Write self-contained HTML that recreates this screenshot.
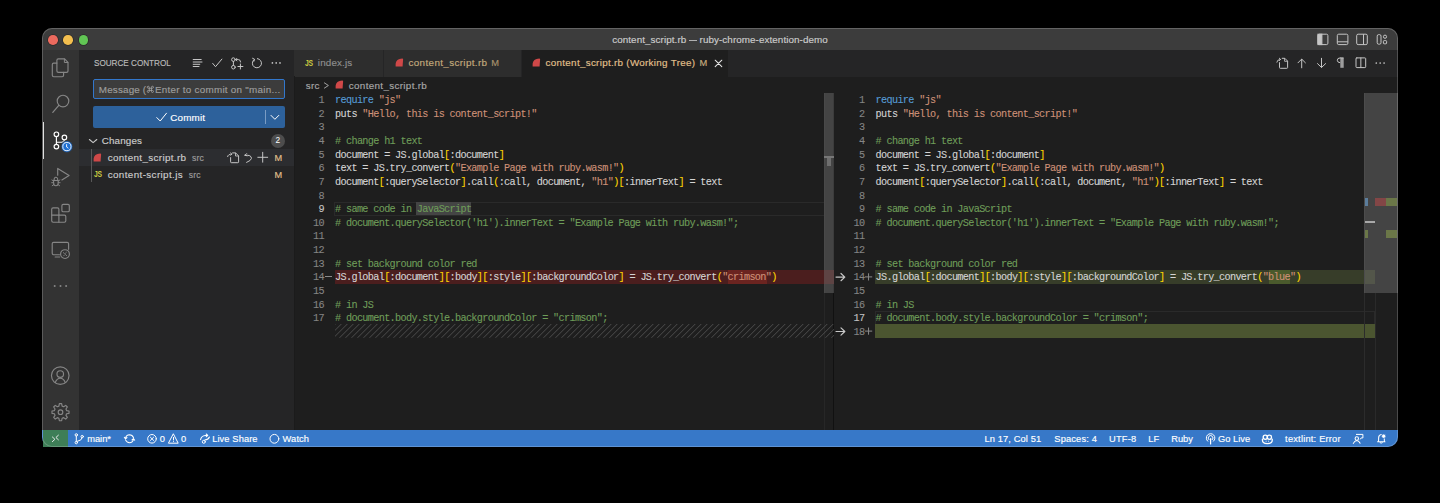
<!DOCTYPE html>
<html><head><meta charset="utf-8"><title>VS Code</title>
<style>
html,body{margin:0;padding:0;background:#000;width:1440px;height:503px;overflow:hidden;}
*{box-sizing:border-box;}
.a{position:absolute;}
.ui{font-family:"Liberation Sans",sans-serif;}
.mono{font-family:"Liberation Mono",monospace;}
#win{position:absolute;left:42px;top:28px;width:1355.5px;height:419px;border-radius:10px;overflow:hidden;background:#1e1e1e;}
#title{position:absolute;left:0;top:0;width:1355.5px;height:21.7px;background:#3c3c3c;}
#act{position:absolute;left:0;top:21.7px;width:37px;height:380.3px;background:#333333;}
#side{position:absolute;left:37px;top:21.7px;width:215px;height:380.3px;background:#252526;}
#tabs{position:absolute;left:252px;top:21.7px;width:1103.5px;height:27px;background:#252526;}
#status{position:absolute;left:0;top:402px;width:1355.5px;height:17px;background:#3778c8;}
.ln{position:absolute;left:0;height:13.625px;line-height:13.625px;font-family:"Liberation Mono",monospace;font-size:10.2px;letter-spacing:-0.663px;transform:translateY(1.1px);-webkit-text-stroke:0.1px currentColor;color:#d4d4d4;white-space:pre;}
.num{position:absolute;height:13.625px;line-height:13.625px;font-family:"Liberation Mono",monospace;font-size:10.2px;letter-spacing:-0.663px;transform:translateY(1.1px);-webkit-text-stroke:0.1px currentColor;color:#858585;text-align:right;white-space:pre;}
.num.act{color:#c6c6c6;}
.k{color:#569cd6}.s{color:#ce9178}.c{color:#6e9d59}.b{color:#ffd700}
.wh{}
.rt{}
.it{}
.tl{width:9.6px;height:9.6px;border-radius:50%;box-shadow:0 0 0 0.7px rgba(20,20,20,0.45);}
.stx{top:430px;height:17px;line-height:17px;font-size:9.3px;color:#ffffff;white-space:nowrap;z-index:10;}
.ui{transform:translateY(0.9px);-webkit-text-stroke:0.15px currentColor;}

</style></head>
<body>
<div id="win">
  <div id="title"></div>
  <div id="act"></div>
  <div id="side"></div>
  <div id="tabs"></div>
  <div id="status"></div>
</div>
<div class="a" style="left:42px;top:28px;width:1355.5px;height:419px;border-radius:10px;box-shadow:inset 0 0 0 1px rgba(255,255,255,0.2);pointer-events:none;z-index:50"></div>
<!-- traffic lights -->
<div class="a tl" style="left:48.2px;top:35.1px;background:#ec6a5e"></div>
<div class="a tl" style="left:63.4px;top:35.1px;background:#f4bf4f"></div>
<div class="a tl" style="left:78.5px;top:35.1px;background:#61c554"></div>
<div class="a ui" style="left:612.2px;top:28px;height:21.7px;line-height:21.7px;font-size:9.85px;color:#cccccc;letter-spacing:0.08px;white-space:nowrap">content_script.rb</div>
<div class="a" style="left:689.1px;top:39.8px;width:7.7px;height:1px;background:#b0b0b0"></div>
<div class="a ui" style="left:699.6px;top:28px;height:21.7px;line-height:21.7px;font-size:9.85px;color:#cccccc;letter-spacing:0.07px;white-space:nowrap">ruby-chrome-extention-demo</div>
<!-- layout icons -->
<svg class="a" style="left:1316px;top:33px" width="14" height="13" viewBox="0 0 14 13" fill="none" stroke="#c5c5c5" stroke-width="1">
  <rect x="1.9" y="1.2" width="10" height="10.4" rx="1.4"/><rect x="1.9" y="1.2" width="4" height="10.4" fill="#c5c5c5"/>
</svg>
<svg class="a" style="left:1336px;top:33px" width="14" height="13" viewBox="0 0 14 13" fill="none" stroke="#c5c5c5" stroke-width="1">
  <rect x="1.3" y="1.2" width="10.6" height="10.4" rx="1.4"/><line x1="1.3" y1="8.8" x2="11.9" y2="8.8"/>
</svg>
<svg class="a" style="left:1355px;top:33px" width="14" height="13" viewBox="0 0 14 13" fill="none" stroke="#c5c5c5" stroke-width="1">
  <rect x="1.7" y="1.2" width="10.6" height="10.4" rx="1.4"/><line x1="8.5" y1="1.2" x2="8.5" y2="11.6"/>
</svg>
<svg class="a" style="left:1375px;top:33px" width="14" height="13" viewBox="0 0 14 13" fill="none" stroke="#c5c5c5" stroke-width="1">
  <rect x="2.2" y="1.6" width="3.8" height="9.6" rx="1.5"/><circle cx="10" cy="3.7" r="1.6"/><rect x="8.4" y="7.6" width="3.2" height="3.2" rx="0.8"/>
</svg>
<svg class="a" style="left:0;top:0;z-index:20" width="100" height="503" viewBox="0 0 100 503">
<g fill="none" stroke="#868686" stroke-width="1.15" stroke-linejoin="round" stroke-linecap="round">
  <!-- files -->
  <path d="M56.9 63.1 H53.7 Q52.3 63.1 52.3 64.5 V75.3 Q52.3 76.7 53.7 76.7 H62.2 Q63.6 76.7 63.6 75.3 V72.3"/>
  <path d="M58.3 58.9 H64.6 L68 62.3 V70.9 Q68 72.3 66.6 72.3 H58.3 Q56.9 72.3 56.9 70.9 V60.3 Q56.9 58.9 58.3 58.9 Z"/>
  <path d="M64.4 59.1 V62.5 H67.8" stroke-width="1"/>
  <!-- search -->
  <circle cx="63" cy="101.1" r="5.8"/>
  <path d="M58.8 105.4 L52.8 112.3" stroke-width="1.25"/>
  <!-- debug -->
  <path d="M57.7 175.2 V168.4 L69.1 175.5 L61.9 180"/>
  <path d="M54 180.3 Q54.1 177.3 55.9 177.3 Q57.7 177.3 57.8 180.3" stroke-width="1.05"/>
  <path d="M53.6 180.4 H58.2 V183.1 Q58.2 185.8 55.9 185.8 Q53.6 185.8 53.6 183.1 Z" stroke-width="1.05"/>
  <path d="M53.6 181 L51.9 180 M58.2 181 L59.9 180 M53.6 182.7 H51.7 M58.2 182.7 H60.1 M53.9 184.5 L52.2 185.7 M57.9 184.5 L59.6 185.7" stroke-width="0.95"/>
  <!-- extensions -->
  <path d="M53.1 207.9 H57.5 Q58.9 207.9 58.9 209.3 V215.1 H64.4 Q65.8 215.1 65.8 216.5 V220.8 Q65.8 222.2 64.4 222.2 H53.1 Q51.7 222.2 51.7 220.8 V209.3 Q51.7 207.9 53.1 207.9 Z"/>
  <path d="M51.7 215.1 H58.9 V222.2"/>
  <rect x="61.9" y="204.4" width="7.4" height="7.4" rx="1.3"/>
  <!-- remote explorer -->
  <path d="M59.5 254.7 H53.6 Q52.2 254.7 52.2 253.3 V243.8 Q52.2 242.4 53.6 242.4 H67.2 Q68.6 242.4 68.6 243.8 V249.3"/>
  <path d="M55.2 257 H59.6" stroke-width="1.2"/>
  <circle cx="65" cy="254.1" r="4.4"/>
  <path d="M63.3 252.6 L64.5 253.6 M66.7 255.6 L65.5 254.6 M63.6 255.9 L64.6 254.9 M66.4 252.3 L65.4 253.3" stroke-width="0.9"/>
  <!-- account -->
  <circle cx="60.25" cy="375.6" r="8.8"/>
  <circle cx="60.25" cy="374" r="3.3"/>
  <path d="M55.3 382.4 Q56.8 378.2 60.25 378.2 Q63.7 378.2 65.2 382.4"/>
  <!-- gear -->
  <circle cx="60.5" cy="412.2" r="2.3"/>
</g>
<g fill="#868686">
  <circle cx="54.7" cy="285.9" r="1"/><circle cx="60.5" cy="285.9" r="1"/><circle cx="66.1" cy="285.9" r="1"/>
</g>
<path id="gear" fill="none" stroke="#868686" stroke-width="1.15" stroke-linejoin="round" d="M59.36 403.68 L61.64 403.68 L62.11 406.11 L63.66 406.75 L65.72 405.36 L67.34 406.98 L65.95 409.04 L66.59 410.59 L69.02 411.06 L69.02 413.34 L66.59 413.81 L65.95 415.36 L67.34 417.42 L65.72 419.04 L63.66 417.65 L62.11 418.29 L61.64 420.72 L59.36 420.72 L58.89 418.29 L57.34 417.65 L55.28 419.04 L53.66 417.42 L55.05 415.36 L54.41 413.81 L51.98 413.34 L51.98 411.06 L54.41 410.59 L55.05 409.04 L53.66 406.98 L55.28 405.36 L57.34 406.75 L58.89 406.11 Z"/>
<!-- source control (active) -->
<g fill="none" stroke="#ffffff" stroke-width="1.15">
  <circle cx="56.4" cy="134.3" r="2.3"/>
  <circle cx="64.4" cy="137.4" r="2.3"/>
  <circle cx="56.4" cy="146.6" r="2.3"/>
  <path d="M56.4 136.6 V144.3"/>
  <path d="M64.4 139.7 Q64.4 142.2 61.5 142.2 H56.4"/>
</g>
<circle cx="66.9" cy="146.6" r="5.8" fill="#1f6fd1" stroke="#333" stroke-width="0.8"/>
<circle cx="66.9" cy="146.6" r="4.1" fill="none" stroke="#fff" stroke-width="0.9"/>
<path d="M66.6 144.2 V147 L68.4 148.3" fill="none" stroke="#fff" stroke-width="0.9"/>
</svg>
<div class="a" style="left:42.5px;top:122px;width:1.6px;height:36.5px;background:#e0e0e0"></div>

<div class="a" style="font-family:&quot;Liberation Sans&quot;,sans-serif;left:94px;top:56.6px;font-size:8.9px;line-height:12px;color:#bbbbbb;white-space:nowrap;transform:scaleX(0.916);transform-origin:0 0;-webkit-text-stroke:0.15px currentColor">SOURCE CONTROL</div>
<svg class="a" style="left:180px;top:50px;z-index:20" width="114" height="26" viewBox="180 50 114 26">
<g fill="none" stroke="#c5c5c5" stroke-width="1" stroke-linecap="round" stroke-linejoin="round">
  <path d="M193.2 59.5 H201.2 M193.2 62 H202 M193.2 64.3 H199.8 M193.2 66.5 H199"/>
  <path d="M212.7 63.4 L215.5 66.7 L221.9 59.1"/>
  <circle cx="233.4" cy="59.6" r="1.8"/><circle cx="233.4" cy="67.2" r="1.8"/>
  <path d="M233.4 61.4 V65.4"/>
  <path d="M235.6 59.6 H238.4 Q240.6 59.6 240.6 62"/>
  <path d="M236.9 58.3 L235.6 59.6 L236.9 60.9" stroke-width="0.9"/>
  <path d="M240.4 64 V69 M237.9 66.5 H242.9"/>
  <path d="M254 59.6 A4.6 4.6 0 1 0 257.4 58.6"/>
  <path d="M252.6 58.3 L254.6 59.3 L253.9 61.3" stroke-width="1"/>
</g>
<g fill="#c5c5c5"><circle cx="272.4" cy="62.9" r="0.85"/><circle cx="276.2" cy="62.9" r="0.85"/><circle cx="280" cy="62.9" r="0.85"/></g>
</svg>
<!-- input -->
<div class="a" style="left:93.2px;top:79.2px;width:191.6px;height:19.7px;background:#3c3c3c;border:1.2px solid #3277cc;border-radius:2px"></div>
<div class="a ui" style="left:98.8px;top:79.4px;height:19.6px;line-height:19.6px;font-size:9.85px;color:#9e9e9e;letter-spacing:0.17px;white-space:nowrap">Message (</div>
<svg class="a" style="left:144px;top:83px;z-index:20" width="14" height="14" viewBox="144 83 14 14"><path d="M149.25 87.25 V91.45 A1 1 0 1 1 148.25 90.45 H152.45 A1 1 0 1 1 151.45 91.45 V87.25 A1 1 0 1 1 152.45 88.25 H148.25 A1 1 0 1 1 149.25 87.25 Z" fill="none" stroke="#a0a0a0" stroke-width="0.85"/></svg>
<div class="a ui" style="left:155px;top:79.4px;height:19.6px;line-height:19.6px;font-size:9.85px;color:#9e9e9e;letter-spacing:0.26px;white-space:nowrap">Enter to commit on "main...</div>
<!-- commit -->
<div class="a" style="left:93.2px;top:106.2px;width:191.4px;height:21.5px;background:#2d619b;border-radius:2px"></div>
<div class="a" style="left:265px;top:109.8px;width:0.9px;height:14.6px;background:#7a9cc4"></div>
<svg class="a" style="left:150px;top:104px;z-index:20" width="140" height="26" viewBox="150 104 140 26">
<g fill="none" stroke="#ffffff" stroke-width="1" stroke-linecap="round" stroke-linejoin="round">
<path d="M156.8 117.6 L160.2 121 L166.5 113.2"/>
<path d="M271 115.4 L274.9 119.3 L278.8 115.4"/>
</g></svg>
<div class="a ui" style="left:170.2px;top:106.6px;height:20.8px;line-height:20.8px;font-size:9.85px;color:#ffffff;letter-spacing:0.2px;white-space:nowrap">Commit</div>
<!-- changes header -->
<svg class="a" style="left:80px;top:130px;z-index:20" width="30" height="20" viewBox="80 130 30 20">
<path d="M89.4 139.5 L93.1 142.6 L96.8 139.5" fill="none" stroke="#c5c5c5" stroke-width="1.15" stroke-linecap="round" stroke-linejoin="round"/>
</svg>
<div class="a ui" style="left:101.7px;top:132.2px;height:16.7px;line-height:16.7px;font-size:9.85px;color:#cccccc;letter-spacing:0.15px;white-space:nowrap">Changes</div>
<div class="a" style="font-family:&quot;Liberation Sans&quot;,sans-serif;left:270.9px;top:134px;width:14px;height:13.6px;border-radius:7px;background:#4d4d4d;color:#ffffff;font-size:8.3px;line-height:13.6px;text-align:center">2</div>
<!-- row1 -->
<div class="a" style="left:79px;top:148.9px;width:215px;height:16.7px;background:#2c2d30"></div>
<div class="a" style="left:91px;top:148.9px;width:0.8px;height:33.4px;background:#585858"></div>
<svg class="a" style="left:93.4px;top:152.6px;z-index:20" width="10" height="10" viewBox="0 0 10 10"><path d="M0.6 8.4 V6 Q0.9 0.8 7.3 0.4 Q8.1 0.4 8.1 1.2 L7.6 8.4 Z" fill="#cf4848"/></svg>
<div class="a ui" style="left:107.7px;top:148.9px;height:16.7px;line-height:16.7px;font-size:9.85px;color:#cccccc;letter-spacing:0.35px;white-space:nowrap">content_script.rb <span style="font-size:8.6px;color:#9d9d9d;letter-spacing:0.15px">&nbsp;src</span></div>
<svg class="a" style="left:225px;top:150px;z-index:20" width="50" height="15" viewBox="225 150 50 15">
<g fill="none" stroke="#c5c5c5" stroke-width="1" stroke-linejoin="round" stroke-linecap="round">
 <path d="M232.6 152.9 H235.6 L238.6 155.9 V161.9 Q238.6 162.7 237.8 162.7 H231.4 Q230.6 162.7 230.6 161.9 V157.6"/>
 <path d="M235.5 153.1 V156 H238.4" stroke-width="0.85"/>
 <path d="M227.6 156.6 Q227.8 154.2 231.8 154.1 M230.6 153 L231.9 154.1 L230.7 155.3" stroke-width="0.95"/>
 <path d="M245.2 155.3 Q251.6 154.6 251.4 158.5 Q251.1 160.6 246.6 162.4" stroke-width="1"/>
 <path d="M245 155.2 L246.6 153.6 M245 155.2 L247.1 155.8" stroke-width="1"/>
 <path d="M262.7 152.3 V162.2 M257.8 157.3 H267.7"/>
</g></svg>
<div class="a ui" style="left:274.5px;top:148.9px;height:16.7px;line-height:16.7px;font-size:9.2px;color:#e2c08d;white-space:nowrap">M</div>
<!-- row2 -->
<div class="a" style="font-family:&quot;Liberation Sans&quot;,sans-serif;left:94px;top:165.6px;height:16.7px;line-height:16.7px;font-size:8.5px;font-weight:bold;color:#cbcb41;white-space:nowrap;letter-spacing:-0.5px;transform:scaleX(0.8) translateY(0.4px);transform-origin:0 0">JS</div>
<div class="a ui" style="left:107.7px;top:165.6px;height:16.7px;line-height:16.7px;font-size:9.85px;color:#cccccc;letter-spacing:0.38px;white-space:nowrap">content-script.js <span style="font-size:8.6px;color:#9d9d9d;letter-spacing:0.15px">&nbsp;src</span></div>
<div class="a ui" style="left:274.5px;top:165.6px;height:16.7px;line-height:16.7px;font-size:9.2px;color:#e2c08d;white-space:nowrap">M</div>

<!-- tabs -->
<div class="a" style="left:294px;top:49.7px;width:89.4px;height:27px;background:#2d2d2d"></div>
<div class="a" style="left:384.2px;top:49.7px;width:137.3px;height:27px;background:#2d2d2d"></div>
<div class="a" style="left:521.7px;top:49.7px;width:206.8px;height:27px;background:#1e1e1e"></div>
<div class="a" style="font-family:&quot;Liberation Sans&quot;,sans-serif;left:304.6px;top:49.7px;height:26.6px;line-height:26.6px;font-size:8.5px;font-weight:bold;color:#cbcb41;white-space:nowrap;letter-spacing:-0.5px;transform:scaleX(0.8) translateY(0.2px);transform-origin:0 0">JS</div>
<div class="a ui" style="left:317.8px;top:52.3px;height:20px;line-height:20px;font-size:9.85px;color:#8f8f8f;letter-spacing:0.15px;white-space:nowrap">index.js</div>
<svg class="a" style="left:395.1px;top:58.4px" width="10" height="10" viewBox="0 0 10 10"><path d="M0.6 8.4 V6 Q0.9 0.8 7.3 0.4 Q8.1 0.4 8.1 1.2 L7.6 8.4 Z" fill="#cf4848"/></svg>
<div class="a ui" style="left:408.5px;top:52.3px;height:20px;line-height:20px;font-size:9.85px;color:#c4ab7d;letter-spacing:0.36px;white-space:nowrap">content_script.rb</div>
<div class="a ui" style="left:491.3px;top:52.3px;height:20px;line-height:20px;font-size:9.3px;color:#a8926c;white-space:nowrap">M</div>
<svg class="a" style="left:532.2px;top:58.4px" width="10" height="10" viewBox="0 0 10 10"><path d="M0.6 8.4 V6 Q0.9 0.8 7.3 0.4 Q8.1 0.4 8.1 1.2 L7.6 8.4 Z" fill="#cf4848"/></svg>
<div class="a ui" style="left:545.6px;top:52.3px;height:20px;line-height:20px;font-size:9.85px;color:#e2c08d;letter-spacing:0.29px;white-space:nowrap">content_script.rb (Working Tree)</div>
<div class="a ui" style="left:699.4px;top:52.3px;height:20px;line-height:20px;font-size:9.3px;color:#c9ac7f;white-space:nowrap">M</div>
<svg class="a" style="left:712px;top:57px" width="14" height="13" viewBox="712 57 14 13"><path d="M715.2 60.2 L721.8 66.6 M721.8 60.2 L715.2 66.6" stroke="#e8e8e8" stroke-width="1.05" stroke-linecap="round"/></svg>
<!-- tab actions -->
<svg class="a" style="left:1270px;top:52px;z-index:20" width="125" height="22" viewBox="1270 52 125 22">
<g fill="none" stroke="#c5c5c5" stroke-width="1" stroke-linejoin="round" stroke-linecap="round">
  <path d="M1282.2 58.3 H1284.8 L1287.6 61.1 V67.5 Q1287.6 68.3 1286.8 68.3 H1280.3 Q1279.5 68.3 1279.5 67.5 V62.6"/>
  <path d="M1284.6 58.5 V61.3 H1287.4" stroke-width="0.85"/>
  <path d="M1276.8 62.2 Q1276.9 59.6 1280.4 59.4 M1279.3 58.2 L1280.6 59.4 L1279.4 60.6" stroke-width="0.95"/>
  <path d="M1301.7 59.4 V67.8 M1298 62.8 L1301.7 59.1 L1305.4 62.8"/>
  <path d="M1321.5 58.3 V67.3 M1317.5 63.6 L1321.5 67.5 L1325.6 63.6"/>
  <path d="M1356.8 57.9 H1364.9 Q1365.7 57.9 1365.7 58.7 V66.8 Q1365.7 67.6 1364.9 67.6 H1356.8 Q1356 67.6 1356 66.8 V58.7 Q1356 57.9 1356.8 57.9 Z M1360.85 57.9 V67.6"/>
</g>
<path d="M1340 57.9 H1343.6 M1340.2 57.9 Q1337.2 58 1337.3 60.3 Q1337.4 62.6 1340.2 62.7" fill="none" stroke="#c5c5c5" stroke-width="1"/>
<rect x="1340.3" y="58" width="3.4" height="9.8" fill="#c5c5c5" opacity="0.75"/>
<g fill="#c5c5c5"><circle cx="1376.3" cy="63" r="0.85"/><circle cx="1380.2" cy="63" r="0.85"/><circle cx="1384.1" cy="63" r="0.85"/></g>
</svg>
<!-- breadcrumbs -->
<div class="a ui" style="left:305.8px;top:75.6px;height:17px;line-height:17px;font-size:9.85px;color:#a9a9a9;letter-spacing:0.2px;white-space:nowrap">src</div>
<svg class="a" style="left:320px;top:78px" width="12" height="14" viewBox="320 78 12 14"><path d="M324.4 82.9 L328.4 85.5 L324.4 88.1" fill="none" stroke="#a9a9a9" stroke-width="0.95" stroke-linecap="round" stroke-linejoin="round"/></svg>
<svg class="a" style="left:334.7px;top:80.4px" width="10" height="10" viewBox="0 0 10 10"><path d="M0.6 8.4 V6 Q0.9 0.8 7.3 0.4 Q8.1 0.4 8.1 1.2 L7.6 8.4 Z" fill="#cf4848"/></svg>
<div class="a ui" style="left:348.8px;top:75.6px;height:17px;line-height:17px;font-size:9.85px;color:#a9a9a9;letter-spacing:0.33px;white-space:nowrap">content_script.rb</div>

<!-- divider sidebar/editor -->
<div class="a" style="left:294px;top:76.3px;width:1px;height:353.7px;background:#1b1b1b"></div>
<!-- left current line box -->
<div class="a" style="left:334.4px;top:202.3px;width:490px;height:13.4px;border:1px solid #2a2a2a;border-right:none"></div>
<div class="a" style="left:823.5px;top:93px;width:10.5px;height:337px;border-left:0.7px solid #272727"></div>
<div class="a" style="left:833px;top:93px;width:1.2px;height:337px;background:#111111"></div>
<div class="a" style="left:416.1px;top:202px;width:55px;height:13.3px;background:#444444"></div>
<!-- left removed line 14 -->
<div class="a" style="left:334.7px;top:270.3px;width:499.3px;height:13.625px;background:#4b1e1e"></div>
<div class="a" style="left:728px;top:270.3px;width:38.5px;height:13.625px;background:#6b2420"></div>
<!-- hatch line 18 -->
<svg class="a" style="left:334.7px;top:324.2px" width="499.3" height="13.8" viewBox="334.7 324.2 499.3 13.8"><path d="M321.20 338.00 L335.00 324.20 M327.20 338.00 L341.00 324.20 M333.20 338.00 L347.00 324.20 M339.20 338.00 L353.00 324.20 M345.20 338.00 L359.00 324.20 M351.20 338.00 L365.00 324.20 M357.20 338.00 L371.00 324.20 M363.20 338.00 L377.00 324.20 M369.20 338.00 L383.00 324.20 M375.20 338.00 L389.00 324.20 M381.20 338.00 L395.00 324.20 M387.20 338.00 L401.00 324.20 M393.20 338.00 L407.00 324.20 M399.20 338.00 L413.00 324.20 M405.20 338.00 L419.00 324.20 M411.20 338.00 L425.00 324.20 M417.20 338.00 L431.00 324.20 M423.20 338.00 L437.00 324.20 M429.20 338.00 L443.00 324.20 M435.20 338.00 L449.00 324.20 M441.20 338.00 L455.00 324.20 M447.20 338.00 L461.00 324.20 M453.20 338.00 L467.00 324.20 M459.20 338.00 L473.00 324.20 M465.20 338.00 L479.00 324.20 M471.20 338.00 L485.00 324.20 M477.20 338.00 L491.00 324.20 M483.20 338.00 L497.00 324.20 M489.20 338.00 L503.00 324.20 M495.20 338.00 L509.00 324.20 M501.20 338.00 L515.00 324.20 M507.20 338.00 L521.00 324.20 M513.20 338.00 L527.00 324.20 M519.20 338.00 L533.00 324.20 M525.20 338.00 L539.00 324.20 M531.20 338.00 L545.00 324.20 M537.20 338.00 L551.00 324.20 M543.20 338.00 L557.00 324.20 M549.20 338.00 L563.00 324.20 M555.20 338.00 L569.00 324.20 M561.20 338.00 L575.00 324.20 M567.20 338.00 L581.00 324.20 M573.20 338.00 L587.00 324.20 M579.20 338.00 L593.00 324.20 M585.20 338.00 L599.00 324.20 M591.20 338.00 L605.00 324.20 M597.20 338.00 L611.00 324.20 M603.20 338.00 L617.00 324.20 M609.20 338.00 L623.00 324.20 M615.20 338.00 L629.00 324.20 M621.20 338.00 L635.00 324.20 M627.20 338.00 L641.00 324.20 M633.20 338.00 L647.00 324.20 M639.20 338.00 L653.00 324.20 M645.20 338.00 L659.00 324.20 M651.20 338.00 L665.00 324.20 M657.20 338.00 L671.00 324.20 M663.20 338.00 L677.00 324.20 M669.20 338.00 L683.00 324.20 M675.20 338.00 L689.00 324.20 M681.20 338.00 L695.00 324.20 M687.20 338.00 L701.00 324.20 M693.20 338.00 L707.00 324.20 M699.20 338.00 L713.00 324.20 M705.20 338.00 L719.00 324.20 M711.20 338.00 L725.00 324.20 M717.20 338.00 L731.00 324.20 M723.20 338.00 L737.00 324.20 M729.20 338.00 L743.00 324.20 M735.20 338.00 L749.00 324.20 M741.20 338.00 L755.00 324.20 M747.20 338.00 L761.00 324.20 M753.20 338.00 L767.00 324.20 M759.20 338.00 L773.00 324.20 M765.20 338.00 L779.00 324.20 M771.20 338.00 L785.00 324.20 M777.20 338.00 L791.00 324.20 M783.20 338.00 L797.00 324.20 M789.20 338.00 L803.00 324.20 M795.20 338.00 L809.00 324.20 M801.20 338.00 L815.00 324.20 M807.20 338.00 L821.00 324.20 M813.20 338.00 L827.00 324.20 M819.20 338.00 L833.00 324.20 M825.20 338.00 L839.00 324.20 M831.20 338.00 L845.00 324.20" stroke="#505050" stroke-width="0.95" fill="none"/></svg>
<!-- left scrollbar -->
<div class="a" style="left:823.5px;top:93px;width:10.5px;height:199.7px;background:rgba(121,121,121,0.42)"></div>
<div class="a" style="left:823.5px;top:156px;width:10.5px;height:1.8px;background:#777"></div>
<div class="a" style="left:826.6px;top:157.6px;width:4.2px;height:8.2px;background:#6e6e6e"></div>
<!-- right current line box -->
<div class="a" style="left:874.8px;top:311.2px;width:500.2px;height:13.5px;border:1px solid #2a2a2a"></div>
<!-- right inserted line 14 & 18 -->
<div class="a" style="left:875px;top:270.3px;width:500px;height:13.625px;background:#373d29"></div>
<div class="a" style="left:875px;top:324.2px;width:500px;height:13.625px;background:#4b5530"></div>
<div class="a" style="left:1268.7px;top:270.3px;width:21.8px;height:13.625px;background:#4a5a2c"></div>
<!-- right scrollbar / overview -->
<div class="a" style="left:1364px;top:93px;width:0.7px;height:337px;background:#2c2c2c"></div>
<div class="a" style="left:1374.7px;top:292.5px;width:0.7px;height:137.5px;background:#2a2a2a"></div>
<div class="a" style="left:1364px;top:93px;width:33.5px;height:199.5px;background:rgba(121,121,121,0.42)"></div>
<div class="a" style="left:1364.5px;top:197.8px;width:3.6px;height:8px;background:#5b7d9c"></div>
<div class="a" style="left:1374.7px;top:197.8px;width:11.6px;height:8px;background:#834646"></div>
<div class="a" style="left:1386.3px;top:197.8px;width:11.2px;height:8px;background:#6b7748"></div>
<div class="a" style="left:1364.5px;top:221.3px;width:10.5px;height:1.7px;background:#a8a8a8"></div>
<div class="a" style="left:1364.5px;top:230px;width:3.6px;height:8.3px;background:#6b7748"></div>
<div class="a" style="left:1386.3px;top:230px;width:11.2px;height:8.3px;background:#6b7748"></div>
<!-- arrows & gutter marks -->
<svg class="a" style="left:830px;top:265px;z-index:20" width="50" height="75" viewBox="830 265 50 75">
<g fill="none" stroke="#c8c8c8" stroke-width="1" stroke-linecap="round" stroke-linejoin="round">
<path d="M836 277.1 H844.8 M841 273.5 L844.8 277.1 L841 280.7" stroke-width="1.2"/>
<path d="M836 331.5 H844.8 M841 327.9 L844.8 331.5 L841 335.1" stroke-width="1.2"/>
<path d="M865.3 331.1 H871.8 M868.55 327.9 V334.3" stroke="#8a8a8a"/>
<path d="M865.3 276.9 H871.8 M868.55 273.7 V280.1" stroke="#8a8a8a"/>
</g></svg>
<div class="a" style="left:324.8px;top:276.2px;width:6.8px;height:0.9px;background:#8a8a8a"></div>

<!-- status bar items -->
<div class="a" style="left:42.5px;top:430px;width:25.6px;height:17px;background:#3e7e57;z-index:2"></div>
<svg class="a" style="left:42px;top:428px;z-index:20" width="360" height="20" viewBox="42 428 360 20">
<g fill="none" stroke="#ffffff" stroke-width="1" stroke-linecap="round" stroke-linejoin="round">
  <path d="M52.4 437 L54.9 439.3 L52.4 441.6 M58.4 435.2 L55.9 437.5 L58.4 439.8" stroke="#e8e8e8"/>
  <circle cx="76.3" cy="434.9" r="1.2"/><circle cx="76.3" cy="442.6" r="1.2"/><circle cx="82.2" cy="436.6" r="1.2"/>
  <path d="M76.3 436.1 V441.4 M82.2 437.8 Q82.2 440.3 77 441.5"/>
  <path d="M125.5 438.2 Q126.3 434.9 129.5 434.8 Q132.3 434.9 133.5 437.6 M133.5 439.3 Q132.7 442.6 129.5 442.7 Q126.7 442.6 125.5 439.9" stroke-width="1.05"/>
  <path d="M124.3 437.3 L125.5 438.9 L127 437.5 M134.7 440.2 L133.5 438.6 L132 440" stroke-width="1.05"/>
  <circle cx="152" cy="438.8" r="4.3"/>
  <path d="M150.4 437.2 L153.6 440.4 M153.6 437.2 L150.4 440.4"/>
  <path d="M173.5 434.1 L178.2 443.2 H168.8 Z"/>
  <path d="M173.5 437.4 V440 M173.5 441.6 V441.7"/>
  <path d="M200.6 439.6 Q201.2 435.8 205.4 435.4 L207.6 435.4 M206.2 434 L207.8 435.4 L206.2 436.8" stroke-width="1.05"/>
  <path d="M209.4 437 Q208.6 439.6 204.8 440" stroke-width="1.05"/>
  <circle cx="203.8" cy="441.8" r="1.5" stroke-width="1"/>
  <circle cx="274.4" cy="438.8" r="4.4"/>
</g></svg>
<div class="a ui stx" style="left:87.2px">main*</div>
<div class="a ui stx" style="left:159.8px">0</div>
<div class="a ui stx" style="left:181px">0</div>
<div class="a ui stx" style="left:212.2px;letter-spacing:0.1px">Live Share</div>
<div class="a ui stx" style="left:282.6px;letter-spacing:0.1px">Watch</div>
<div class="a ui stx" style="left:984.4px;letter-spacing:0.12px">Ln 17, Col 51</div>
<div class="a ui stx" style="left:1054.3px;letter-spacing:0.15px">Spaces: 4</div>
<div class="a ui stx" style="left:1109px;letter-spacing:0.2px">UTF-8</div>
<div class="a ui stx" style="left:1148.3px">LF</div>
<div class="a ui stx" style="left:1171.2px">Ruby</div>
<div class="a ui stx" style="left:1218.1px">Go Live</div>
<div class="a ui stx" style="left:1285.1px;letter-spacing:0.2px">textlint: Error</div>
<svg class="a" style="left:1200px;top:428px;z-index:20" width="200" height="20" viewBox="1200 428 200 20">
<g fill="none" stroke="#ffffff" stroke-width="1" stroke-linecap="round" stroke-linejoin="round">
  <path d="M1207.7 441.2 A4.3 4.3 0 1 1 1213.5 441.2 M1208.9 439.7 A2.4 2.4 0 1 1 1212.3 439.7"/>
  <path d="M1210.6 438.5 V443.9" stroke-width="1.2"/>
  <circle cx="1265.3" cy="437.2" r="2.1" stroke-width="1.35"/>
  <circle cx="1269.4" cy="437.2" r="2.1" stroke-width="1.35"/>
  <path d="M1262.5 439.2 Q1261.9 443.6 1267.35 443.6 Q1272.8 443.6 1272.2 439.2" stroke-width="1.3"/>
  <circle cx="1356.8" cy="438.5" r="1.7" stroke-width="1.05"/>
  <path d="M1353.3 443.4 Q1354.6 440.6 1356.8 440.4 Q1359 440.6 1360.1 443.2" stroke-width="1.05"/>
  <path d="M1356.4 434.4 H1362.9 V437.9 H1361.2 L1360.4 439.1" stroke-width="1"/>
  <path d="M1377.6 441.8 H1385 M1378.2 441.6 Q1378.6 440.8 1378.6 439.4 V437.9 Q1378.7 434.8 1381.3 434.5 M1384.3 438.6 V439.4 Q1384.3 440.8 1384.6 441.6" stroke-width="1.05"/>
  <path d="M1380.1 442.8 Q1381.2 443.6 1382.3 442.8" stroke-width="1"/>
</g>
<circle cx="1383.7" cy="436.2" r="2.1" fill="#ffffff" stroke="#3778c8" stroke-width="0.7"/>
<ellipse cx="1266.1" cy="441.3" rx="0.45" ry="0.8" fill="#dfe8f5"/><ellipse cx="1268.6" cy="441.3" rx="0.45" ry="0.8" fill="#dfe8f5"/>
</svg>

<!-- left editor -->
<div class="a" id="edL" style="left:335.1px;top:0;width:489px;height:503px;overflow:visible">
<div class="ln" style="top:93.200px"><span class="k">require</span> <span class="s">"js"</span></div>
<div class="ln" style="top:106.825px">puts <span class="s">"Hello, this is content_script!"</span></div>
<div class="ln" style="top:120.450px"></div>
<div class="ln" style="top:134.075px"><span class="c"># change h1 text</span></div>
<div class="ln" style="top:147.700px">document = JS.global<span class="b">[</span>:document<span class="b">]</span></div>
<div class="ln" style="top:161.325px">text = JS.try_convert<span class="b">(</span><span class="s">"Example Page with ruby.wasm!"</span><span class="b">)</span></div>
<div class="ln" style="top:174.950px">document<span class="b">[</span>:querySelector<span class="b">]</span>.call<span class="b">(</span>:call, document, <span class="s">"h1"</span><span class="b">)</span><span class="b">[</span>:innerText<span class="b">]</span> = text</div>
<div class="ln" style="top:188.575px"></div>
<div class="ln" style="top:202.200px"><span class="c"># same code in </span><span class="c wh">JavaScript</span></div>
<div class="ln" style="top:215.825px"><span class="c"># document.querySelector('h1').innerText = "Example Page with ruby.wasm!";</span></div>
<div class="ln" style="top:229.450px"></div>
<div class="ln" style="top:243.075px"></div>
<div class="ln" style="top:256.700px"><span class="c"># set background color red</span></div>
<div class="ln" style="top:270.325px">JS.global<span class="b">[</span>:document<span class="b">]</span><span class="b">[</span>:body<span class="b">]</span><span class="b">[</span>:style<span class="b">]</span><span class="b">[</span>:backgroundColor<span class="b">]</span> = JS.try_convert<span class="b">(</span><span class="s">"</span><span class="s rt">crimson</span><span class="s">"</span><span class="b">)</span></div>
<div class="ln" style="top:283.950px"></div>
<div class="ln" style="top:297.575px"><span class="c"># in JS</span></div>
<div class="ln" style="top:311.200px"><span class="c"># document.body.style.backgroundColor = "crimson";</span></div>
</div>
<div class="a" id="edR" style="left:875.6px;top:0;width:489px;height:503px;overflow:visible">
<div class="ln" style="top:93.200px"><span class="k">require</span> <span class="s">"js"</span></div>
<div class="ln" style="top:106.825px">puts <span class="s">"Hello, this is content_script!"</span></div>
<div class="ln" style="top:120.450px"></div>
<div class="ln" style="top:134.075px"><span class="c"># change h1 text</span></div>
<div class="ln" style="top:147.700px">document = JS.global<span class="b">[</span>:document<span class="b">]</span></div>
<div class="ln" style="top:161.325px">text = JS.try_convert<span class="b">(</span><span class="s">"Example Page with ruby.wasm!"</span><span class="b">)</span></div>
<div class="ln" style="top:174.950px">document<span class="b">[</span>:querySelector<span class="b">]</span>.call<span class="b">(</span>:call, document, <span class="s">"h1"</span><span class="b">)</span><span class="b">[</span>:innerText<span class="b">]</span> = text</div>
<div class="ln" style="top:188.575px"></div>
<div class="ln" style="top:202.200px"><span class="c"># same code in </span><span class="c">JavaScript</span></div>
<div class="ln" style="top:215.825px"><span class="c"># document.querySelector('h1').innerText = "Example Page with ruby.wasm!";</span></div>
<div class="ln" style="top:229.450px"></div>
<div class="ln" style="top:243.075px"></div>
<div class="ln" style="top:256.700px"><span class="c"># set background color red</span></div>
<div class="ln" style="top:270.325px">JS.global<span class="b">[</span>:document<span class="b">]</span><span class="b">[</span>:body<span class="b">]</span><span class="b">[</span>:style<span class="b">]</span><span class="b">[</span>:backgroundColor<span class="b">]</span> = JS.try_convert<span class="b">(</span><span class="s">"</span><span class="s it">blue</span><span class="s">"</span><span class="b">)</span></div>
<div class="ln" style="top:283.950px"></div>
<div class="ln" style="top:297.575px"><span class="c"># in JS</span></div>
<div class="ln" style="top:311.200px"><span class="c"># document.body.style.backgroundColor = "crimson";</span></div>
<div class="ln" style="top:324.825px"></div>
</div>
<div class="num" style="top:93.200px;left:283.9px;width:40px">1</div>
<div class="num" style="top:106.825px;left:283.9px;width:40px">2</div>
<div class="num" style="top:120.450px;left:283.9px;width:40px">3</div>
<div class="num" style="top:134.075px;left:283.9px;width:40px">4</div>
<div class="num" style="top:147.700px;left:283.9px;width:40px">5</div>
<div class="num" style="top:161.325px;left:283.9px;width:40px">6</div>
<div class="num" style="top:174.950px;left:283.9px;width:40px">7</div>
<div class="num" style="top:188.575px;left:283.9px;width:40px">8</div>
<div class="num act" style="top:202.200px;left:283.9px;width:40px">9</div>
<div class="num" style="top:215.825px;left:283.9px;width:40px">10</div>
<div class="num" style="top:229.450px;left:283.9px;width:40px">11</div>
<div class="num" style="top:243.075px;left:283.9px;width:40px">12</div>
<div class="num" style="top:256.700px;left:283.9px;width:40px">13</div>
<div class="num" style="top:270.325px;left:283.9px;width:40px">14</div>
<div class="num" style="top:283.950px;left:283.9px;width:40px">15</div>
<div class="num" style="top:297.575px;left:283.9px;width:40px">16</div>
<div class="num" style="top:311.200px;left:283.9px;width:40px">17</div>
<div class="num" style="top:93.200px;left:824.5px;width:40px">1</div>
<div class="num" style="top:106.825px;left:824.5px;width:40px">2</div>
<div class="num" style="top:120.450px;left:824.5px;width:40px">3</div>
<div class="num" style="top:134.075px;left:824.5px;width:40px">4</div>
<div class="num" style="top:147.700px;left:824.5px;width:40px">5</div>
<div class="num" style="top:161.325px;left:824.5px;width:40px">6</div>
<div class="num" style="top:174.950px;left:824.5px;width:40px">7</div>
<div class="num" style="top:188.575px;left:824.5px;width:40px">8</div>
<div class="num" style="top:202.200px;left:824.5px;width:40px">9</div>
<div class="num" style="top:215.825px;left:824.5px;width:40px">10</div>
<div class="num" style="top:229.450px;left:824.5px;width:40px">11</div>
<div class="num" style="top:243.075px;left:824.5px;width:40px">12</div>
<div class="num" style="top:256.700px;left:824.5px;width:40px">13</div>
<div class="num" style="top:270.325px;left:824.5px;width:40px">14</div>
<div class="num" style="top:283.950px;left:824.5px;width:40px">15</div>
<div class="num" style="top:297.575px;left:824.5px;width:40px">16</div>
<div class="num act" style="top:311.200px;left:824.5px;width:40px">17</div>
<div class="num" style="top:324.825px;left:824.5px;width:40px">18</div>

</body></html>
